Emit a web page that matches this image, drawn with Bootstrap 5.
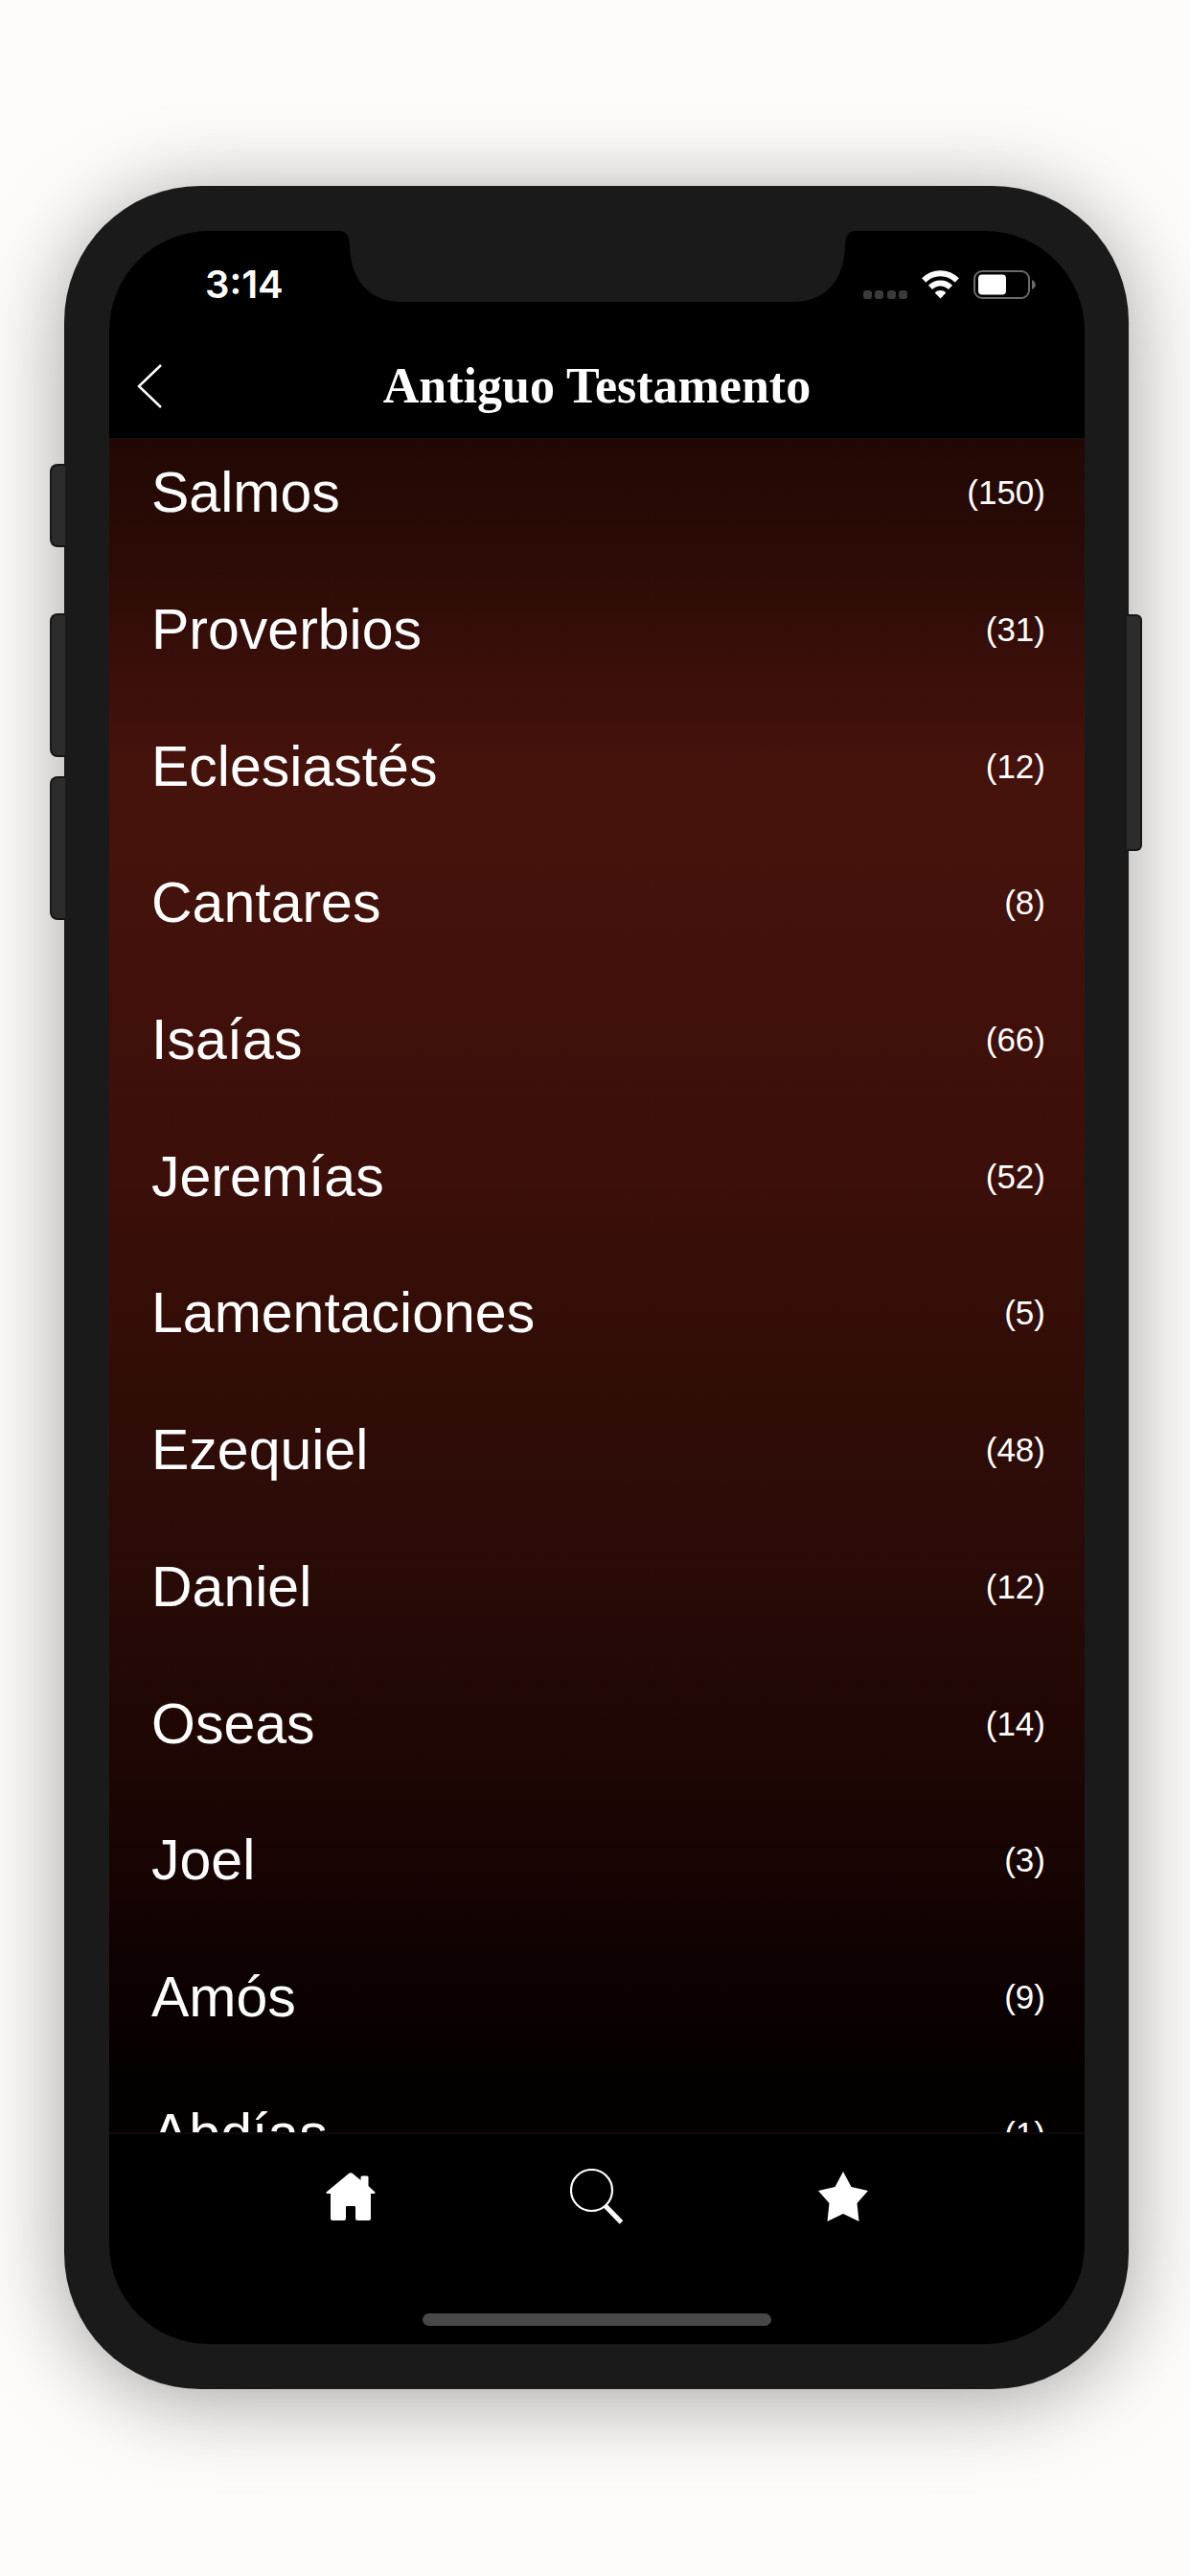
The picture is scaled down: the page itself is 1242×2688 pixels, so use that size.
<!DOCTYPE html>
<html lang="es">
<head>
<meta charset="utf-8">
<meta name="viewport" content="width=device-width, initial-scale=1">
<title>Antiguo Testamento</title>
<link rel="stylesheet" href="https://cdn.jsdelivr.net/npm/bootstrap@5.3.0/dist/css/bootstrap.min.css">
<style>
  body { background: #fdfcfb; font-family: "Liberation Sans", Arial, sans-serif; color: #fff; }
  .stage { padding: 194px 64px 195px 67px; }
  .phone { min-height: 0; background: #1a1a1a; border-radius: 142px; padding: 47px 46px 47px 47px; box-shadow: 0 10px 90px rgba(0,0,0,.36); }
  .phone-screen { min-height: 0; border-radius: 104px; background: #000; }
  /* hardware keys on the side of the case */
  .side-key { width: 16px; background: #2c2c2c; border: 2px solid #161616; }
  .side-key-left { left: -15px; border-right: 0; border-radius: 8px 0 0 8px; }
  .side-key-right { right: -14px; border-left: 0; border-radius: 0 6px 6px 0; top: 447px; height: 247px; }
  .key-mute { top: 290px; height: 87px; }
  .key-up { top: 446px; height: 150px; }
  .key-down { top: 616px; height: 150px; }
  .notch { left: 240px; top: -1px; }
  .status { height: 112px; padding: 0 50px 0 100px; }
  .clock { font-family: Inter, sans-serif; font-weight: 600; font-size: 40px; line-height: 48px; }
  .status-icons { gap: 15px; }
  .topbar { height: 106px; padding: 0 20px 4px; border-bottom: 2px solid #1c0e0a; }
  .topbar-title { font-family: "Liberation Serif", serif; font-weight: 700; font-size: 52px; line-height: 60px; }
  .icon-btn { width: 44px; height: 60px; }
  .book-view { min-height: 0; background: linear-gradient(#220804 0%, #2b0b06 7%, #3b0f0a 14%, #45120c 19%, #45130c 24%, #41100b 33%, #3d0f0a 42%, #330d07 53%, #2b0b07 65%, #200704 76%, #160403 85%, #0c0101 92%, #040000 97%, #040000 100%); }
  .book-list { height: 1855px; margin-top: -16px; }
  .book { padding: 0 41px 0 44px; color: #fff; background: transparent; font-size: 59px; line-height: 70px; }
  .book-count { font-size: 35px; }
  .tabs { height: 221px; border-top: 2px solid #0f0a0a; padding: 29px 124px 19px 124px; }
  .tabs-link { width: 72px; height: 72px; }
  .home-bar { width: 364px; height: 13px; background: #484848; }
</style>
</head>
<body>
<div class="stage d-flex flex-column vh-100">
  <div class="phone position-relative flex-fill d-flex flex-column">
    <span class="side-key side-key-left key-mute position-absolute"></span>
    <span class="side-key side-key-left key-up position-absolute"></span>
    <span class="side-key side-key-left key-down position-absolute"></span>
    <span class="side-key side-key-right position-absolute"></span>

    <main class="phone-screen position-relative flex-fill d-flex flex-column overflow-hidden">
      <svg class="notch position-absolute" width="539" height="75" viewBox="0 0 539 75" aria-hidden="true"><path fill="#1a1a1a" d="M0 0V1C8 1 11 7 11 17C12 54 33 75 65 75H474C506 75 527 54 528 17C528 7 531 1 539 1V0Z"/></svg>

      <div class="status d-flex flex-shrink-0 justify-content-between align-items-center">
        <span class="clock">3:14</span>
        <div class="status-icons d-flex align-items-center">
          <svg width="46" height="30" viewBox="0 0 46 30" fill="#3a3a3a" aria-hidden="true"><rect y="21" width="9" height="9" rx="3"/><rect x="12" y="21" width="9" height="9" rx="3"/><rect x="25" y="21" width="9" height="9" rx="3"/><rect x="37" y="21" width="9" height="9" rx="3"/></svg>
          <svg width="39" height="30" viewBox="0 0 39 30" aria-hidden="true"><g fill="none" stroke="#fff" stroke-width="6"><path d="M2.200 10.500C12 .8 27 .8 36.800 10.500"/><path d="M9 17.800C15 12 24 12 30 17.800"/></g><path fill="#fff" d="M19.500 29.500L13.700 23.500C17 20.300 22 20.300 25.300 23.500Z"/></svg>
          <svg width="66" height="30" viewBox="0 0 66 30" aria-hidden="true"><rect x="1" y="1" width="57" height="28" rx="8" fill="none" stroke="#6a6a6a" stroke-width="2"/><rect x="5" y="4.500" width="29" height="21" rx="4" fill="#fff"/><path d="M61 10C66 12 66 18 61 20Z" fill="#6a6a6a"/></svg>
        </div>
      </div>

      <header class="topbar d-flex flex-shrink-0 justify-content-between align-items-center">
        <button type="button" class="icon-btn btn p-0 border-0 d-flex align-items-center justify-content-center" aria-label="Atrás">
          <svg width="26" height="46" viewBox="0 0 26 46" fill="none" stroke="#fff" stroke-width="2.500"><path d="M25 1L2 23L25 45"/></svg>
        </button>
        <h1 class="topbar-title m-0">Antiguo Testamento</h1>
        <span class="icon-btn"></span>
      </header>

      <div class="book-view flex-fill overflow-hidden d-flex flex-column">
        <nav class="book-list list-group list-group-flush flex-shrink-0" aria-label="Libros">
          <a href="#" class="book list-group-item border-0 flex-fill d-flex justify-content-between align-items-center"><span>Salmos</span><span class="book-count">(150)</span></a>
          <a href="#" class="book list-group-item border-0 flex-fill d-flex justify-content-between align-items-center"><span>Proverbios</span><span class="book-count">(31)</span></a>
          <a href="#" class="book list-group-item border-0 flex-fill d-flex justify-content-between align-items-center"><span>Eclesiastés</span><span class="book-count">(12)</span></a>
          <a href="#" class="book list-group-item border-0 flex-fill d-flex justify-content-between align-items-center"><span>Cantares</span><span class="book-count">(8)</span></a>
          <a href="#" class="book list-group-item border-0 flex-fill d-flex justify-content-between align-items-center"><span>Isaías</span><span class="book-count">(66)</span></a>
          <a href="#" class="book list-group-item border-0 flex-fill d-flex justify-content-between align-items-center"><span>Jeremías</span><span class="book-count">(52)</span></a>
          <a href="#" class="book list-group-item border-0 flex-fill d-flex justify-content-between align-items-center"><span>Lamentaciones</span><span class="book-count">(5)</span></a>
          <a href="#" class="book list-group-item border-0 flex-fill d-flex justify-content-between align-items-center"><span>Ezequiel</span><span class="book-count">(48)</span></a>
          <a href="#" class="book list-group-item border-0 flex-fill d-flex justify-content-between align-items-center"><span>Daniel</span><span class="book-count">(12)</span></a>
          <a href="#" class="book list-group-item border-0 flex-fill d-flex justify-content-between align-items-center"><span>Oseas</span><span class="book-count">(14)</span></a>
          <a href="#" class="book list-group-item border-0 flex-fill d-flex justify-content-between align-items-center"><span>Joel</span><span class="book-count">(3)</span></a>
          <a href="#" class="book list-group-item border-0 flex-fill d-flex justify-content-between align-items-center"><span>Amós</span><span class="book-count">(9)</span></a>
          <a href="#" class="book list-group-item border-0 flex-fill d-flex justify-content-between align-items-center"><span>Abdías</span><span class="book-count">(1)</span></a>
        </nav>
      </div>

      <footer class="tabs d-flex flex-shrink-0 flex-column justify-content-between align-items-center">
        <nav class="d-flex justify-content-around w-100" aria-label="Secciones">
          <a href="#" class="tabs-link d-flex align-items-center justify-content-center" aria-label="Inicio">
            <svg width="52" height="50" viewBox="0 0 52 50" fill="#fff"><path d="M24 1Q26 -.5 28 1L36.500 8V5Q36.500 3.500 38 3.500H43Q44.500 3.500 44.500 5V14L51.500 20.500Q52 22 50 22H47V48Q47 50 45 50H33Q31 50 31 48V36Q31 35 30 35H22Q21 35 21 36V48Q21 50 19 50H7Q5 50 5 48V22H2Q0 22 .5 20.500Z"/></svg>
          </a>
          <a href="#" class="tabs-link d-flex align-items-center justify-content-center" aria-label="Buscar">
            <svg width="56" height="58" viewBox="0 0 56 58" fill="none" stroke="#fff"><circle cx="22.500" cy="22.500" r="21.500" stroke-width="2.200"/><path d="M36.500 38.500L53.500 56" stroke-width="5"/></svg>
          </a>
          <a href="#" class="tabs-link d-flex align-items-center justify-content-center" aria-label="Favoritos">
            <svg width="52" height="52" viewBox="0 0 52 52" fill="#fff"><path d="M26 0L34.500 16L52 20L40.500 33L42.500 52L26 44L9.500 52L11.500 33L0 20L17.500 16Z"/></svg>
          </a>
        </nav>
        <div class="home-bar rounded-pill"></div>
      </footer>
    </main>
  </div>
</div>
<script src="https://cdn.jsdelivr.net/npm/bootstrap@5.3.0/dist/js/bootstrap.bundle.min.js"></script>
</body>
</html>
